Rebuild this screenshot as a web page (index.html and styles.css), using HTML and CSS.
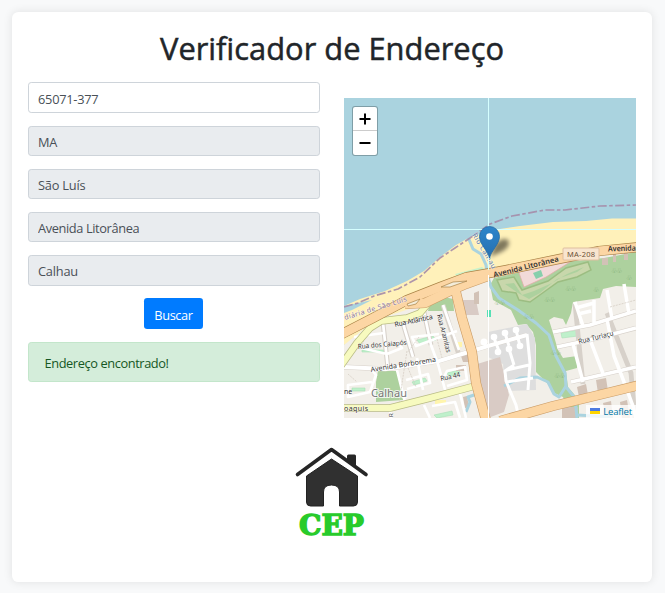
FILE: index.html
```html
<!DOCTYPE html>
<html lang="pt-BR">
<head>
<meta charset="utf-8">
<title>Verificador de Endereço</title>
<link rel="stylesheet" href="styles.css">
</head>
<body>
<main class="card">
  <h1 class="title"><svg class="title-art" viewBox="0 0 352 50"><text x="4" y="32" textLength="344" lengthAdjust="spacingAndGlyphs">Verificador de Endereço</text></svg></h1>
  <div class="columns">
    <form class="form">
      <input class="field cep" value="65071-377">
      <input class="field" value="MA" disabled>
      <input class="field" value="São Luís" disabled>
      <input class="field street" value="Avenida Litorânea" disabled>
      <input class="field" value="Calhau" disabled>
      <button class="button" type="button">Buscar</button>
      <div class="alert">Endereço encontrado!</div>
    </form>
    <section class="map">
      <svg class="tiles" viewBox="344 98 292 320">
        <defs>
          <filter id="soft" x="-50%" y="-50%" width="200%" height="200%"><feGaussianBlur stdDeviation="2"/></filter>
          <linearGradient id="pin" x1="0" y1="0" x2="0" y2="1"><stop offset="0" stop-color="#2e85cb"/><stop offset="1" stop-color="#2570b0"/></linearGradient>
        </defs>
        <rect x="344" y="98" width="292" height="320" fill="#aad3df"/>
        <!-- beach -->
        <path d="M344 306L360 299L385 291L407 281L424 271L440 257L456 245L470 237L484 233L500 229L520 226L553 222L586 221L612 218.500L636 218.500V270H490L344 345Z" fill="#fff1ba"/>
        <path d="M344 306L372 300L352 310L344 313Z" fill="#aad3df"/>
        <path d="M455 274L482 267L488 272L460 281Z" fill="#c9f2cb"/>
        <!-- land -->
        <path d="M344 345L375 320L400 312L430 302L450 288L490 276L540 266L590 256L636 248V418H344Z" fill="#f2efe9"/>
        <path d="M430 303L440 296L453 299L454 311L428 311Z" fill="#add19e"/>
        <path d="M494 278L530 270L565 262L604 258L636 252V287L616 286L603 289L600 298L573 302L571 313L566 325L563 319L554 317L549 320L553 333L558 350L563 358L577 356V368L566 371L568 387L579 400V418H571L563 397L554 393L547 383L536 372L536 345L533 332L526 324L518 325L511 310L493 300L490 285Z" fill="#add19e"/>
        <path d="M497 280L514 277L522 290L548 281L566 268L588 262L591 270L577 277L558 282L544 292L530 302L519 300L516 293L502 291Z" fill="#c8d7ab" stroke="#9cbd82" stroke-width="1.500"/>
        <path d="M505 284L514 283L522 295L534 291L552 283L567 274L584 267L577 272L557 279L540 293L529 299L518 293Z" fill="#add19e"/>
        <path d="M518 270L560 261L570 262L546 277L524 287Z" fill="#f2dad9" stroke="#e5a7a7" stroke-width=".7"/>
        <path d="M533 273L541 270L543 276L536 279Z" fill="#87cfac"/>
        <path d="M378 371H398L403 400L376 402L376 382Z" fill="#add19e"/>
        <path d="M488 332L527 324L535 338L536 390L505 391L503 364L488 357Z" fill="#dedede"/>
        <path d="M474 365L500 357L509 395L504 412L488 418L482 394Z" fill="#d9cbc5"/>
        <path d="M461 300H476L479 315H466Z" fill="#d9cbc5"/>
        <g fill="#bff0cb" stroke="#a9dfb7" stroke-width=".6">
          <path d="M417 340L433 336L436 340L420 344ZM362 350H384V352H362ZM412 382L425 378L427 381L414 385ZM352 388H365V391H352ZM447 373L459 370L460 373L449 377ZM434 415L452 411L453 415L437 418ZM561 333L578 330V336L562 338Z"/>
        </g>
        <path d="M487 310H491V317H487Z" fill="#56e0b5"/>
        <g fill="#d2c2b6">
          <path d="M474 293L479 291V304H474ZM460 353H469V362H463ZM456 365H466V371H456ZM596 380L606 378L608 391L598 393ZM577 387L586 384L588 395L579 397ZM562 407H578V418H562ZM603 403L611 401L613 418H606ZM620 402L627 400L630 418H622ZM613 253H616V262H613ZM624 251H628V260H624ZM463 397L467 396L469 407L465 408ZM602 258H608V265H602Z"/>
        </g>
        <path d="M435 400h11v5h-11zM454 342h8v5h-8z" fill="#fff5ad"/>
        <!-- streams -->
        <g fill="none" stroke="#aad3df" stroke-width="3" stroke-linejoin="round">
          <path d="M468 237L473 249L481 254L486 265L487 274L491 287L499 298L518 310L536 323L549 335L556 356L565 373L566 387L575 398L577 418"/>
          <path d="M504 386L520 378L537 377L548 382L554 394L559 397L566 386M480 393L468 397L470 402L466 412M577 415L612 417"/>
        </g>
        <!-- minor streets -->
        <g fill="none" stroke="#d7d1ca" stroke-width="4.800" stroke-linejoin="round">
          <path d="M344 367L386 369L439 361L488 346L527 335M383 323L388 369M402 320L413 357M424 312L431 345M443 305L459 355M553 332L590 325L636 311M557 347L590 340L636 328M571 382L610 373L636 367M607 313L631 373L635 418M575 304L583 384"/>
        </g>
        <g fill="none" stroke="#fff" stroke-width="4" stroke-linejoin="round">
          <path d="M344 367L386 369L439 361L488 346L527 335"/>
          <path stroke-width="3.500" d="M553 332L590 325L636 311M557 347L590 340L636 328M571 382L610 373L636 367M575 302L583 326M607 290L612 319M624 284L629 314M591 342L604 376M573 344L583 382M607 319L614 356L621 374L633 406L636 418M594 300L594 324M576 308L594 303M578 314L591 311"/>
          <path stroke-width="2.700" d="M383 323L388 369M354 337L384 333M361 348L387 354L402 348L397 341M402 320L413 357M424 312L431 345L438 364L447 397M443 305L459 350M457 331L416 346L412 337L439 334M417 358L423 390M372 370L376 375L370 392L348 397L348 385L372 382M397 370L405 402M390 409L391 418M407 389L430 383L428 374L406 380M443 379L447 371L465 367L467 380L447 386M424 405L430 418M432 406L455 402L460 418M459 389L466 418"/>
          <path stroke-width="3" d="M494 338L499 351M505 333L509 346M509 349L514 365M516 330L520 346M507 370L529 365M507 382L533 378M527 334L530 363L528 390M514 365L505 371L506 381L516 405L519 418"/>
        </g>
        <g fill="#fff"><circle cx="494" cy="337" r="3.300"/><circle cx="505" cy="333" r="3.300"/><circle cx="516" cy="330" r="3.300"/><circle cx="498" cy="352" r="3.300"/><circle cx="509" cy="349" r="3.300"/><circle cx="520" cy="346" r="3.300"/><circle cx="484" cy="342" r="3.500"/></g>
        <g fill="none" stroke="#d1c8bf" stroke-width=".7" stroke-dasharray="2 1"><path d="M369 323L362 346M407 351L399 403M437 339L442 358M408 368L416 387M419 337L408 352M348 374L357 382M610 307L636 300"/></g>
        <!-- secondary roads -->
        <g fill="none" stroke-linejoin="round">
          <path d="M340 367L357 343L370 328L381 321L407 318L420 313L430 301M340 408H390L430 398L475 386" stroke="#b9bc85" stroke-width="7.500"/>
          <path d="M340 367L357 343L370 328L381 321L407 318L420 313L430 301M340 408H390L430 398L475 386" stroke="#f7fabf" stroke-width="6"/>
          <path d="M340 335L373 318L407 300L440 287L467 277L490 273L506 270L559 259L599 251L640 247" stroke="#a98246" stroke-width="10"/>
          <path d="M405 304L425 303L450 291L466 284L488 276M455 288L462 318L472 352L476 383L487 424M500 421L553 406L603 394L640 385" stroke="#ca9c66" stroke-width="10"/>
          <path d="M340 335L373 318L407 300L440 287L467 277L490 273L506 270L559 259L599 251L640 247" stroke="#fcd6a4" stroke-width="8.800"/>
          <path d="M405 304L425 303L450 291L466 284L488 276M455 288L462 318L472 352L476 383L487 424M500 421L553 406L603 394L640 385" stroke="#fcd6a4" stroke-width="8.800"/>
          <path d="M441 287L453 282L467 281L450 287ZM407 304L420 299L416 304L408 306Z" fill="#f4edda" stroke="#a98246" stroke-width=".7"/>
          <path d="M344 307L358 303L374 296L398 289L420 277L440 258L455 248L470 238L490 224L512 216L545 210L565 210L600 206L636 205" stroke="#a58ca9" stroke-width="1.700" stroke-dasharray="9 2.500 3.500 2.500" opacity=".9"/>
        </g>
        <!-- woodland symbols -->
        <g class="trees"><text x="494" y="305">♧♧</text><text x="544" y="302">♧♧</text><text x="565" y="291">♧♧</text><text x="611" y="273">♧♧</text><text x="626" y="280">♧</text><text x="523" y="319">♧♧</text><text x="550" y="355">♧♧</text><text x="554" y="378">♧♧</text><text x="593" y="292">♧</text></g>
        <!-- place and street names -->
        <g class="labels">
          <text class="main-road" transform="translate(494 277.500) rotate(-14)" textLength="67" lengthAdjust="spacingAndGlyphs">Avenida Litorânea</text>
          <text class="main-road" transform="translate(608 251.500) rotate(-2)" textLength="28" lengthAdjust="spacingAndGlyphs">Avenida</text>
          <text transform="translate(371 372) rotate(-9)" textLength="66">Avenida Borborema</text>
          <text transform="translate(395 327) rotate(-12)" textLength="39">Rua Atlântica</text>
          <text transform="translate(358 349) rotate(-5)" textLength="49" lengthAdjust="spacingAndGlyphs">Rua dos Caiapós</text>
          <text transform="translate(437 315) rotate(76)" textLength="39" lengthAdjust="spacingAndGlyphs">Rua Aramitas</text>
          <text transform="translate(441 381) rotate(-12)" textLength="20" lengthAdjust="spacingAndGlyphs">Rua 44</text>
          <text transform="translate(579 344) rotate(-14)" textLength="36" lengthAdjust="spacingAndGlyphs">Rua Turiaçu</text>
          <text x="344" y="411" textLength="24">oaquis</text><text x="344" y="394">ne</text>
          <text class="small" transform="translate(393 417) rotate(-90)">R</text>
          <text class="blue" transform="translate(472 235) rotate(59)" textLength="40">Rio Calhau</text>
          <text class="blue faint" transform="translate(345 320) rotate(-17)" textLength="65">diária de São Luís</text>
          <text class="town" x="371" y="397" textLength="36">Calhau</text>
        </g>
        <rect x="563" y="248" width="36" height="12" rx="1" fill="#f8e5cf" stroke="#dfbfa0"/>
        <text class="shield" x="567" y="257" textLength="28">MA-208</text>
        <path d="M488.500 98V270M344 229.500H636" stroke="#d6ffff" stroke-width="1"/>
        <path d="M488.500 275V418" stroke="#fff"/>
        <!-- marker -->
        <path d="M490 257L495 244Q503 237 508 240Q512 247 499 253Z" fill="#000" opacity=".5" filter="url(#soft)"/>
        <path d="M489.500 258C488 251 479.500 244 479.500 236.500A10 10 0 0 1 499.500 236.500C499.500 244 491 251 489.500 258Z" fill="url(#pin)" stroke="#2469a3" stroke-width=".8"/>
        <circle cx="489.500" cy="236.500" r="3.300" fill="#fff"/>
      </svg>
      <div class="zoom"><span class="step"><svg viewBox="0 0 24 23"><path d="M6.500 12H17.500M12 6.500V17.500"/></svg></span><span class="step"><svg viewBox="0 0 24 23"><path d="M6.500 12H17.500"/></svg></span></div>
      <div class="credit"><svg class="flag" viewBox="0 0 10 6"><path fill="#4c7be1" d="M0 0h10v3H0z"/><path fill="#ffd500" d="M0 3h10v3H0z"/></svg><span class="brand">Leaflet</span></div>
    </section>
  </div>
  <svg class="logo" viewBox="287 443 90 106">
    <path d="M297.500 474.500L331.500 449.500L366 474.500" fill="none" stroke="#262626" stroke-width="3.600" stroke-linecap="round" stroke-linejoin="round"/>
    <path d="M347 456V456Q347 454.500 348.500 454.500H354.500Q356 454.500 356 456V466.500L347 460Z" fill="#262626"/>
    <path d="M306.500 476L331.500 459L357.500 476V502Q357.500 506 353.500 506H339.500V492Q339.500 485 331.500 485Q323.500 485 323.500 492V506H310.500Q306.500 506 306.500 502Z" fill="#303030" stroke="#222"/>
    <text x="299" y="534.500" textLength="65" lengthAdjust="spacingAndGlyphs">CEP</text>
  </svg>
</main>
</body>
</html>
```
FILE: styles.css
```css
* { box-sizing: border-box; }
html { font-size: 12.8px; }
body {
  margin: 0;
  padding: 12px 13px 11px 12px;
  background: #f8f9fa;
  color: #212529;
  font-family: "Segoe UI", "Open Sans", "Noto Sans", sans-serif;
  line-height: 1.5;
}
.card {
  height: 570px;
  padding: 16px;
  background: #fff;
  border-radius: 6.4px;
  box-shadow: 0 0 10px rgba(0, 0, 0, .1);
}
.title { display: flex; justify-content: center; height: 50px; margin: 0 0 4.4px; }
.title-art {
  width: 352px;
  height: 50px;
  fill: #212529;
  stroke: #212529;
  stroke-width: .5px;
  font-size: 31px;
  font-weight: 500;
}
.columns { display: grid; grid-template-columns: 292px 292px; gap: 24px; }
.form { display: flex; flex-direction: column; align-items: center; gap: 12.8px; }
.field {
  width: 100%;
  height: 30.4px;
  padding: 2px 9px 0;
  border: 1px solid #ced4da;
  border-radius: 3.2px;
  background: #fff;
  color: #495057;
  font: 12.8px "Segoe UI", "Open Sans", sans-serif;
  letter-spacing: -.2px;
}
.field:disabled { background: #e9ecef; opacity: 1; }
.field.street { letter-spacing: -.38px; }
.field.cep { letter-spacing: -.25px; }
.button {
  width: 59px;
  height: 30.4px;
  margin-right: 1px;
  padding: 2px 0 0;
  border: 0;
  border-radius: 3.2px;
  background: #007bff;
  color: #fff;
  font: 12.8px "Segoe UI", "Open Sans", sans-serif;
  letter-spacing: -.4px;
}
.alert {
  width: 100%;
  height: 40px;
  padding: 11px 15.500px;
  border: 1px solid #c3e6cb;
  border-radius: 3.2px;
  background: #d4edda;
  color: #155724;
  letter-spacing: -.4px;
}
.map { position: relative; height: 320px; margin-top: 15.6px; }
.tiles { display: block; width: 292px; height: 320px; }
.labels { fill: #333; font: 7px "Noto Sans", sans-serif; paint-order: stroke; stroke: #fff; stroke-opacity: .55; stroke-width: 1px; }
.labels .main-road { font-size: 7.6px; font-weight: 600; stroke: #fcd6a4; }
.labels .blue { fill: #5b77a8; }
.labels .faint { fill: #8b739d; }
.labels .small { font-size: 6px; }
.labels .town { fill: #777; font-size: 11px; stroke-opacity: .8; stroke-width: 2px; }
.shield { fill: #6b5138; font: 7.5px "Noto Sans", sans-serif; }
.trees { fill: #81ad75; font: 7px "DejaVu Sans", sans-serif; letter-spacing: -1px; }
.zoom {
  position: absolute;
  top: 8px;
  left: 8px;
  width: 26px;
  border: 1px solid rgba(0, 0, 0, .25);
  border-radius: 3px;
  background: #fff;
  background-clip: padding-box;
}
.step { display: block; height: 23px; }
.step + .step { height: 25px; border-top: 1px solid #ccc; }
.step svg { display: block; width: 24px; height: 23px; fill: none; stroke: #000; stroke-width: 2; }
.credit {
  position: absolute;
  right: 0;
  bottom: 0;
  display: flex;
  align-items: center;
  gap: 3px;
  height: 13px;
  padding: 0 4px;
  background: rgba(255, 255, 255, .8);
}
.flag { width: 10px; height: 6px; }
.brand { color: #0078a8; font: 9.6px/13px "Open Sans", sans-serif; letter-spacing: -.2px; }
.logo { display: block; width: 90px; height: 106px; margin: 25px auto 0; }
.logo text { fill: #28cb2b; font: bold 27px "DejaVu Serif", serif; stroke: #28cb2b; stroke-width: 1.4px; }
```
